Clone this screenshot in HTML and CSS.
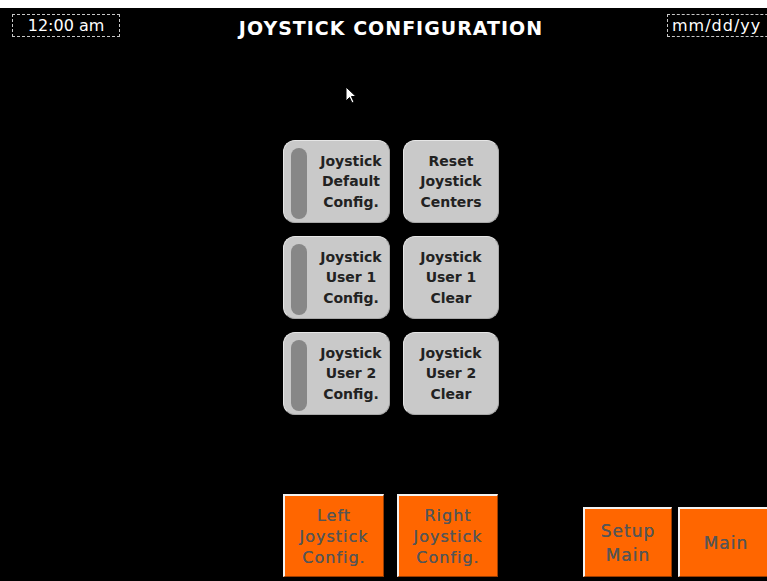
FILE: index.html
```html
<!DOCTYPE html>
<html lang="en">
<head>
    <meta charset="UTF-8">
    <meta name="viewport" content="width=device-width, initial-scale=1.0">
    <title>Joystick Configuration</title>
    <link rel="stylesheet" href="styles.css">
</head>
<body>

    <div class="top-strip"></div>

    <!-- Header -->
    <div class="header">
        <div class="clock">12:00 am</div>
        <h1 class="title">JOYSTICK CONFIGURATION</h1>
        <div class="date">mm/dd/yy</div>
    </div>

    <!-- Joystick buttons -->
    <div class="config-grid">
        <button class="grey-btn with-bar"><span class="bar"></span><span class="label">Joystick<br>Default<br>Config.</span></button>
        <button class="grey-btn"><span class="label">Reset<br>Joystick<br>Centers</span></button>
        <button class="grey-btn with-bar"><span class="bar"></span><span class="label">Joystick<br>User 1<br>Config.</span></button>
        <button class="grey-btn"><span class="label">Joystick<br>User 1<br>Clear</span></button>
        <button class="grey-btn with-bar"><span class="bar"></span><span class="label">Joystick<br>User 2<br>Config.</span></button>
        <button class="grey-btn"><span class="label">Joystick<br>User 2<br>Clear</span></button>
    </div>

    <!-- Bottom navigation -->
    <div class="footer">
        <button class="orange-btn tall">Left<br>Joystick<br>Config.</button>
        <button class="orange-btn tall">Right<br>Joystick<br>Config.</button>
        <button class="orange-btn short setup">Setup<br>Main</button>
        <button class="orange-btn short main">Main</button>
    </div>

    <svg class="cursor" width="14" height="20" viewBox="0 0 14 20">
        <path d="M1 1 L1 15 L4.5 11.5 L7 17 L9 16 L6.5 10.5 L11 10.5 Z" fill="#fff" stroke="#000" stroke-width="1"/>
    </svg>

</body>
</html>
```

FILE: styles.css
```css
html, body {
    overflow: hidden;
}

body {
    margin: 0;
    padding: 0;
    width: 767px;
    height: 581px;
    background-color: #000;
    font-family: 'DejaVu Sans', Verdana, sans-serif;
    display: flex;
    flex-direction: column;
    position: relative;
}

.top-strip {
    height: 8px;
    background-color: #fff;
}

.header {
    display: grid;
    grid-template-columns: 120px 547px 100px;
    height: 36px;
    align-items: start;
}

.clock, .date {
    margin-top: 6px;
    height: 21px;
    line-height: 21px;
    border: 1px dashed #c8c8c8;
    color: #fff;
    font-size: 16px;
}

.clock {
    justify-self: end;
    width: 106px;
    text-align: center;
}

.date {
    width: 110px;
    padding-left: 4px;
    letter-spacing: 1px;
    white-space: nowrap;
}

.title {
    margin: 0;
    padding-top: 9px;
    padding-right: 5px;
    color: #fff;
    font-size: 19px;
    font-weight: bold;
    letter-spacing: 1px;
    text-align: center;
    line-height: 22px;
}

.config-grid {
    display: grid;
    grid-template-columns: 107px 96px;
    grid-auto-rows: 83px;
    column-gap: 13px;
    row-gap: 13px;
    margin-left: 283px;
    margin-top: 96px;
}

.grey-btn {
    display: flex;
    align-items: center;
    justify-content: center;
    padding: 0;
    background-color: #c9c9c9;
    border: 1px solid #a8a8a8;
    border-top-color: #e6e6e6;
    border-left-color: #e6e6e6;
    border-radius: 12px;
    font-family: 'DejaVu Sans', Verdana, sans-serif;
    font-size: 14px;
    font-weight: bold;
    line-height: 20.5px;
    color: #222;
    position: relative;
}

.grey-btn.with-bar {
    justify-content: flex-start;
    padding-left: 7px;
    padding-top: 2px;
    align-items: stretch;
}

.bar {
    width: 16px;
    margin: 5px 0 3px;
    background-color: #878787;
    border-radius: 8px;
}

.with-bar .label {
    flex: 1;
    align-self: center;
    text-align: center;
    padding-left: 6px;
    margin-top: -2px;
}

.footer {
    display: flex;
    align-items: flex-end;
    margin-top: auto;
    padding-bottom: 4px;
    padding-left: 283px;
}

.orange-btn {
    flex-shrink: 0;
    padding: 0;
    background-color: #ff6600;
    border-style: solid;
    border-width: 2px 1px 1px 2px;
    border-color: #f2f2f2 #9a3d00 #9a3d00 #f2f2f2;
    color: #555;
    font-family: 'DejaVu Sans', Verdana, sans-serif;
    font-size: 16px;
    letter-spacing: 1px;
    line-height: 21px;
    text-align: center;
    text-shadow: 0 0 0.4px #555;
}

.orange-btn.tall {
    width: 101px;
    height: 83px;
    margin-right: 13px;
}

.orange-btn.short {
    height: 70px;
    font-size: 17px;
    line-height: 24px;
}

.orange-btn.setup {
    width: 89px;
    margin-left: 72px;
}

.orange-btn.main {
    width: 95px;
    margin-left: 6px;
}

.cursor {
    position: absolute;
    left: 345px;
    top: 86px;
}
```
